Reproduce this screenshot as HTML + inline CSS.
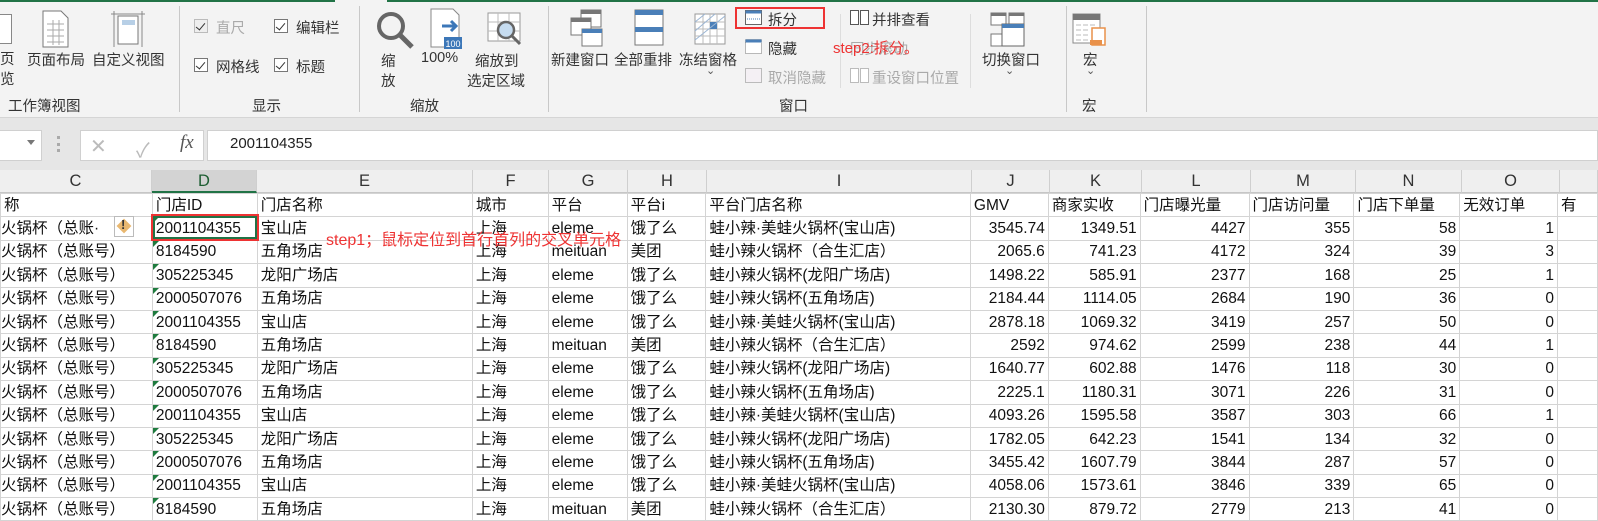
<!DOCTYPE html>
<html><head><meta charset="utf-8">
<style>
*{margin:0;padding:0;box-sizing:border-box}
body{width:1598px;height:506px;overflow:hidden;background:#fff;font-family:"Liberation Sans","Noto Sans CJK SC",sans-serif;color:#222;position:relative}
.a{position:absolute;white-space:nowrap}
.rib{position:absolute;left:0;top:0;width:1598px;height:118px;background:#f3f3f3;border-bottom:1px solid #d5d5d5}
.t{font-size:14.5px;color:#333}
.g{color:#aaa}
.sep{position:absolute;top:6px;width:1px;height:106px;background:#c8c8c8}
.cb{position:absolute;width:14px;height:14px;border:1px solid #777;background:#fff}
.cb:after{content:"";position:absolute;left:3px;top:1px;width:4px;height:8px;border:solid #333;border-width:0 1px 1px 0;transform:rotate(40deg)}
table{position:absolute;left:0;top:193px;border-collapse:collapse;table-layout:fixed}
td{border:1px solid #d4d4d4;height:23.4px;font-size:15.5px;white-space:nowrap;overflow:hidden;padding:0 3px;line-height:21px;color:#111}
td.n{text-align:right}
td.c{padding-left:0}
.hdr{position:absolute;top:170px;height:23px;background:#efefef;border-bottom:1px solid #c6c6c6;border-right:1px solid #cfcfcf;font-size:16.5px;text-align:center;line-height:23px;color:#333}
.tri{position:relative}
.tri:before{content:"";position:absolute;left:0;top:0;border-top:6px solid #1e7b3e;border-right:6px solid transparent}
</style></head><body>
<div class="rib">
  <div class="a" style="left:0;top:0;width:335px;height:2px;background:#217346"></div>
  <div class="a" style="left:387px;top:0;width:1211px;height:2px;background:#217346"></div>
  <div class="a" style="left:-6px;top:14px;width:18px;height:30px;border:1px solid #888;background:#fff"></div>
  <div class="a t" style="left:0;top:48px">页</div>
  <div class="a t" style="left:0;top:68px">览</div>
  <svg class="a" style="left:42px;top:10px" width="28" height="38"><path d="M1 1h18l7 7v29H1z" fill="#fff" stroke="#777"/><path d="M5 14h17M5 20h17M5 26h17M5 32h17M11 10v25M17 10v25" stroke="#aaa"/></svg>
  <div class="a t" style="left:27px;top:49px">页面布局</div>
  <svg class="a" style="left:110px;top:10px" width="36" height="38"><path d="M4 1v36M32 1v36M1 4h34" stroke="#888"/><rect x="8" y="6" width="20" height="28" fill="#fff" stroke="#777"/><rect x="12" y="10" width="13" height="5" fill="#b7cfe6"/></svg>
  <div class="a t" style="left:92px;top:49px">自定义视图</div>
  <div class="a t" style="left:8px;top:95px">工作簿视图</div>
  <div class="sep" style="left:179px"></div>
  <div class="cb" style="left:194px;top:19px;border-color:#bbb;background:#eee"></div>
  <div class="a t g" style="left:216px;top:17px">直尺</div>
  <div class="cb" style="left:274px;top:19px"></div>
  <div class="a t" style="left:296px;top:17px">编辑栏</div>
  <div class="cb" style="left:194px;top:58px"></div>
  <div class="a t" style="left:216px;top:56px">网格线</div>
  <div class="cb" style="left:274px;top:58px"></div>
  <div class="a t" style="left:296px;top:56px">标题</div>
  <div class="a t" style="left:252px;top:95px">显示</div>
  <div class="sep" style="left:359px"></div>
  <svg class="a" style="left:375px;top:10px" width="40" height="40"><circle cx="16" cy="16" r="12" fill="none" stroke="#666" stroke-width="4"/><path d="M25 25l12 12" stroke="#666" stroke-width="5"/></svg>
  <div class="a t" style="left:381px;top:50px">缩</div>
  <div class="a t" style="left:381px;top:70px">放</div>
  <svg class="a" style="left:430px;top:8px" width="36" height="42"><path d="M1 1h22l6 6v32H1z" fill="#fff" stroke="#888"/><path d="M12 18h14M21 13l5 5-5 5" stroke="#3c77b8" stroke-width="3" fill="none"/><rect x="14" y="29" width="18" height="12" fill="#3c77b8"/><text x="15.5" y="39" font-size="9" fill="#fff" font-family="Liberation Sans">100</text></svg>
  <div class="a t" style="left:421px;top:50px">100%</div>
  <svg class="a" style="left:487px;top:12px" width="40" height="40"><rect x="1" y="1" width="32" height="28" fill="#fff" stroke="#999"/><path d="M1 10h32M1 19h32M11 1v28M22 1v28" stroke="#bbb"/><circle cx="19" cy="18" r="8" fill="#c6dcf0" stroke="#666" stroke-width="2.5"/><path d="M25 24l8 8" stroke="#666" stroke-width="3"/></svg>
  <div class="a t" style="left:475px;top:50px">缩放到</div>
  <div class="a t" style="left:467px;top:70px">选定区域</div>
  <div class="a t" style="left:410px;top:95px">缩放</div>
  <div class="sep" style="left:548px"></div>
  <svg class="a" style="left:570px;top:9px" width="34" height="38"><rect x="11" y="1" width="20" height="17" fill="#fff" stroke="#777"/><rect x="11" y="1" width="20" height="4" fill="#777"/><rect x="1" y="9" width="20" height="17" fill="#fff" stroke="#777"/><rect x="1" y="9" width="20" height="4" fill="#777"/><rect x="12" y="20" width="20" height="17" fill="#fff" stroke="#777"/><rect x="12" y="20" width="20" height="4" fill="#4a7fb8"/></svg>
  <div class="a t" style="left:551px;top:49px">新建窗口</div>
  <svg class="a" style="left:634px;top:9px" width="30" height="38"><rect x="1" y="1" width="28" height="35" fill="#fff" stroke="#777"/><rect x="1" y="1" width="28" height="5" fill="#4a7fb8"/><rect x="1" y="18" width="28" height="5" fill="#4a7fb8"/></svg>
  <div class="a t" style="left:614px;top:49px">全部重排</div>
  <svg class="a" style="left:694px;top:13px" width="34" height="34"><rect x="1" y="1" width="30" height="30" fill="#fff" stroke="#999"/><path d="M1 9h30M1 16h30M1 23h30M9 1v30M16 1v30M23 1v30" stroke="#bbb"/><rect x="16" y="9" width="7" height="7" fill="#4a7fb8"/><path d="M1 9l10-8M1 18l20-17M1 27l30-24" stroke="#9cb6d4"/></svg>
  <div class="a t" style="left:679px;top:49px">冻结窗格</div>
  <div class="a" style="left:706px;top:64px;font-size:11px;color:#555">⌄</div>
  <div class="a" style="left:735px;top:7px;width:90px;height:22px;border:2px solid #e33"></div>
  <svg class="a" style="left:745px;top:10px" width="18" height="16"><rect x="0.5" y="0.5" width="16" height="14" fill="#fff" stroke="#666"/><rect x="0.5" y="0.5" width="16" height="3" fill="#4a7fb8"/><path d="M2 9h13" stroke="#4a7fb8" stroke-dasharray="1 1"/></svg>
  <div class="a t" style="left:768px;top:9px">拆分</div>
  <svg class="a" style="left:745px;top:39px" width="18" height="16"><rect x="0.5" y="0.5" width="16" height="14" fill="#fff" stroke="#777" stroke-dasharray="1 1"/><rect x="0.5" y="0.5" width="16" height="3" fill="#4a7fb8"/></svg>
  <div class="a t" style="left:768px;top:38px">隐藏</div>
  <svg class="a" style="left:745px;top:68px" width="18" height="16"><rect x="0.5" y="0.5" width="16" height="14" fill="#f4f0f4" stroke="#bbb"/></svg>
  <div class="a t g" style="left:768px;top:67px">取消隐藏</div>
  <div class="sep" style="left:840px;top:14px;height:74px;background:#ddd"></div>
  <svg class="a" style="left:850px;top:10px" width="20" height="16"><rect x="0.5" y="0.5" width="8" height="14" fill="#fff" stroke="#555"/><rect x="10.5" y="0.5" width="8" height="14" fill="#fff" stroke="#555"/></svg>
  <div class="a t" style="left:872px;top:9px">并排查看</div>
  <div class="a t g" style="left:850px;top:38px">同步滚动</div>
  <div class="a" style="left:833px;top:37px;font-size:15px;color:#ee3333">step2:拆分。</div>
  <svg class="a" style="left:850px;top:68px" width="20" height="16"><rect x="0.5" y="0.5" width="8" height="14" fill="#fff" stroke="#bbb"/><rect x="10.5" y="0.5" width="8" height="14" fill="#fff" stroke="#bbb"/></svg>
  <div class="a t g" style="left:872px;top:67px">重设窗口位置</div>
  <div class="sep" style="left:970px;top:14px;height:74px;background:#ddd"></div>
  <svg class="a" style="left:990px;top:12px" width="36" height="36"><rect x="1" y="1" width="15" height="12" fill="#fff" stroke="#777"/><rect x="1" y="1" width="15" height="3" fill="#777"/><rect x="19" y="1" width="15" height="12" fill="#fff" stroke="#777"/><rect x="19" y="1" width="15" height="3" fill="#777"/><rect x="1" y="22" width="12" height="12" fill="#fff" stroke="#777"/><rect x="12" y="12" width="22" height="22" fill="#fff" stroke="#666"/><rect x="12" y="12" width="22" height="4" fill="#4a7fb8"/></svg>
  <div class="a t" style="left:982px;top:49px">切换窗口</div>
  <div class="a" style="left:1005px;top:64px;font-size:11px;color:#555">⌄</div>
  <div class="a t" style="left:779px;top:95px">窗口</div>
  <div class="sep" style="left:1066px"></div>
  <svg class="a" style="left:1072px;top:13px" width="36" height="34"><rect x="1" y="1" width="27" height="29" fill="#fff" stroke="#888"/><rect x="1" y="1" width="27" height="6" fill="#777"/><path d="M4 12h20M4 17h14M4 22h14M4 27h14" stroke="#bbb" stroke-dasharray="5 2"/><rect x="20" y="15" width="13" height="17" fill="#fff" stroke="#e9914a" stroke-width="1.5"/><rect x="18" y="27" width="12" height="5" fill="#e9914a"/></svg>
  <div class="a t" style="left:1083px;top:49px">宏</div>
  <div class="a" style="left:1086px;top:64px;font-size:11px;color:#555">⌄</div>
  <div class="a t" style="left:1082px;top:95px">宏</div>
  <div class="sep" style="left:1146px"></div>
</div>
<div class="a" style="left:0;top:118px;width:1598px;height:52px;background:#e6e6e6"></div>
<div class="a" style="left:0;top:130px;width:42px;height:31px;background:#fff;border:1px solid #d0d0d0;border-left:none"></div>
<div class="a" style="left:27px;top:140px;border-top:5px solid #777;border-left:4px solid transparent;border-right:4px solid transparent"></div>
<div class="a" style="left:57px;top:136px;width:3px;height:16px;border-left:3px dotted #aaa"></div>
<div class="a" style="left:80px;top:130px;width:124px;height:31px;background:#fff;border:1px solid #d0d0d0"></div>
<div class="a" style="left:90px;top:134px;font-size:20px;color:#bbb">✕</div>
<div class="a" style="left:136px;top:134px;font-size:20px;color:#bbb">✓</div>
<div class="a" style="left:180px;top:132px;font-size:19px;font-style:italic;font-family:'Liberation Serif',serif;color:#555">fx</div>
<div class="a" style="left:207px;top:130px;width:1391px;height:31px;background:#fff;border:1px solid #d0d0d0"></div>
<div class="a" style="left:230px;top:135px;font-size:15px;color:#222">2001104355</div>
<div class="hdr" style="left:0;width:152px">C</div>
<div class="hdr" style="left:152px;width:105px;background:#d3d3d3;border-bottom:2px solid #217346;color:#1e5e32">D</div>
<div class="hdr" style="left:257px;width:216px">E</div>
<div class="hdr" style="left:473px;width:76px">F</div>
<div class="hdr" style="left:549px;width:79px">G</div>
<div class="hdr" style="left:628px;width:79px">H</div>
<div class="hdr" style="left:707px;width:265px">I</div>
<div class="hdr" style="left:972px;width:78px">J</div>
<div class="hdr" style="left:1050px;width:92px">K</div>
<div class="hdr" style="left:1142px;width:109px">L</div>
<div class="hdr" style="left:1251px;width:105px">M</div>
<div class="hdr" style="left:1356px;width:106px">N</div>
<div class="hdr" style="left:1462px;width:98px">O</div>
<div class="hdr" style="left:1560px;width:38px"></div>
<table>
<colgroup><col style="width:152px"><col style="width:105px"><col style="width:216px"><col style="width:76px"><col style="width:79px"><col style="width:79px"><col style="width:265px"><col style="width:78px"><col style="width:92px"><col style="width:109px"><col style="width:105px"><col style="width:106px"><col style="width:98px"><col style="width:40px"></colgroup>
<tr><td>称</td><td>门店ID</td><td>门店名称</td><td>城市</td><td>平台</td><td>平台i</td><td>平台门店名称</td><td>GMV</td><td>商家实收</td><td>门店曝光量</td><td>门店访问量</td><td>门店下单量</td><td>无效订单</td><td>有</td></tr>
<tr><td class="c">火锅杯（总账·</td><td class="tri">2001104355</td><td>宝山店</td><td>上海</td><td>eleme</td><td>饿了么</td><td>蛙小辣·美蛙火锅杯(宝山店)</td><td class="n">3545.74</td><td class="n">1349.51</td><td class="n">4427</td><td class="n">355</td><td class="n">58</td><td class="n">1</td><td></td></tr>
<tr><td class="c">火锅杯（总账号）</td><td class="tri">8184590</td><td>五角场店</td><td>上海</td><td>meituan</td><td>美团</td><td>蛙小辣火锅杯（合生汇店）</td><td class="n">2065.6</td><td class="n">741.23</td><td class="n">4172</td><td class="n">324</td><td class="n">39</td><td class="n">3</td><td></td></tr>
<tr><td class="c">火锅杯（总账号）</td><td class="tri">305225345</td><td>龙阳广场店</td><td>上海</td><td>eleme</td><td>饿了么</td><td>蛙小辣火锅杯(龙阳广场店)</td><td class="n">1498.22</td><td class="n">585.91</td><td class="n">2377</td><td class="n">168</td><td class="n">25</td><td class="n">1</td><td></td></tr>
<tr><td class="c">火锅杯（总账号）</td><td class="tri">2000507076</td><td>五角场店</td><td>上海</td><td>eleme</td><td>饿了么</td><td>蛙小辣火锅杯(五角场店)</td><td class="n">2184.44</td><td class="n">1114.05</td><td class="n">2684</td><td class="n">190</td><td class="n">36</td><td class="n">0</td><td></td></tr>
<tr><td class="c">火锅杯（总账号）</td><td class="tri">2001104355</td><td>宝山店</td><td>上海</td><td>eleme</td><td>饿了么</td><td>蛙小辣·美蛙火锅杯(宝山店)</td><td class="n">2878.18</td><td class="n">1069.32</td><td class="n">3419</td><td class="n">257</td><td class="n">50</td><td class="n">0</td><td></td></tr>
<tr><td class="c">火锅杯（总账号）</td><td class="tri">8184590</td><td>五角场店</td><td>上海</td><td>meituan</td><td>美团</td><td>蛙小辣火锅杯（合生汇店）</td><td class="n">2592</td><td class="n">974.62</td><td class="n">2599</td><td class="n">238</td><td class="n">44</td><td class="n">1</td><td></td></tr>
<tr><td class="c">火锅杯（总账号）</td><td class="tri">305225345</td><td>龙阳广场店</td><td>上海</td><td>eleme</td><td>饿了么</td><td>蛙小辣火锅杯(龙阳广场店)</td><td class="n">1640.77</td><td class="n">602.88</td><td class="n">1476</td><td class="n">118</td><td class="n">30</td><td class="n">0</td><td></td></tr>
<tr><td class="c">火锅杯（总账号）</td><td class="tri">2000507076</td><td>五角场店</td><td>上海</td><td>eleme</td><td>饿了么</td><td>蛙小辣火锅杯(五角场店)</td><td class="n">2225.1</td><td class="n">1180.31</td><td class="n">3071</td><td class="n">226</td><td class="n">31</td><td class="n">0</td><td></td></tr>
<tr><td class="c">火锅杯（总账号）</td><td class="tri">2001104355</td><td>宝山店</td><td>上海</td><td>eleme</td><td>饿了么</td><td>蛙小辣·美蛙火锅杯(宝山店)</td><td class="n">4093.26</td><td class="n">1595.58</td><td class="n">3587</td><td class="n">303</td><td class="n">66</td><td class="n">1</td><td></td></tr>
<tr><td class="c">火锅杯（总账号）</td><td class="tri">305225345</td><td>龙阳广场店</td><td>上海</td><td>eleme</td><td>饿了么</td><td>蛙小辣火锅杯(龙阳广场店)</td><td class="n">1782.05</td><td class="n">642.23</td><td class="n">1541</td><td class="n">134</td><td class="n">32</td><td class="n">0</td><td></td></tr>
<tr><td class="c">火锅杯（总账号）</td><td class="tri">2000507076</td><td>五角场店</td><td>上海</td><td>eleme</td><td>饿了么</td><td>蛙小辣火锅杯(五角场店)</td><td class="n">3455.42</td><td class="n">1607.79</td><td class="n">3844</td><td class="n">287</td><td class="n">57</td><td class="n">0</td><td></td></tr>
<tr><td class="c">火锅杯（总账号）</td><td class="tri">2001104355</td><td>宝山店</td><td>上海</td><td>eleme</td><td>饿了么</td><td>蛙小辣·美蛙火锅杯(宝山店)</td><td class="n">4058.06</td><td class="n">1573.61</td><td class="n">3846</td><td class="n">339</td><td class="n">65</td><td class="n">0</td><td></td></tr>
<tr><td class="c">火锅杯（总账号）</td><td class="tri">8184590</td><td>五角场店</td><td>上海</td><td>meituan</td><td>美团</td><td>蛙小辣火锅杯（合生汇店）</td><td class="n">2130.30</td><td class="n">879.72</td><td class="n">2779</td><td class="n">213</td><td class="n">41</td><td class="n">0</td><td></td></tr>
</table>
<div class="a" style="left:151px;top:214px;width:108px;height:27px;border:2px solid #e33"></div>
<div class="a" style="left:153px;top:216px;width:104px;height:23px;border:2px solid #217346"></div>
<div class="a" style="left:114px;top:216px;width:20px;height:21px;border:1px solid #bbb;background:#fff"></div>
<div class="a" style="left:117px;top:219px;width:14px;height:14px;background:#e9b870;transform:rotate(45deg) scale(.75)"></div>
<div class="a" style="left:121px;top:217px;font-size:13px;font-weight:bold;color:#333">!</div>
<div class="a" style="left:326px;top:226px;font-size:16px;color:#ee3333">step1；鼠标定位到首行首列的交叉单元格</div>
</body></html>
